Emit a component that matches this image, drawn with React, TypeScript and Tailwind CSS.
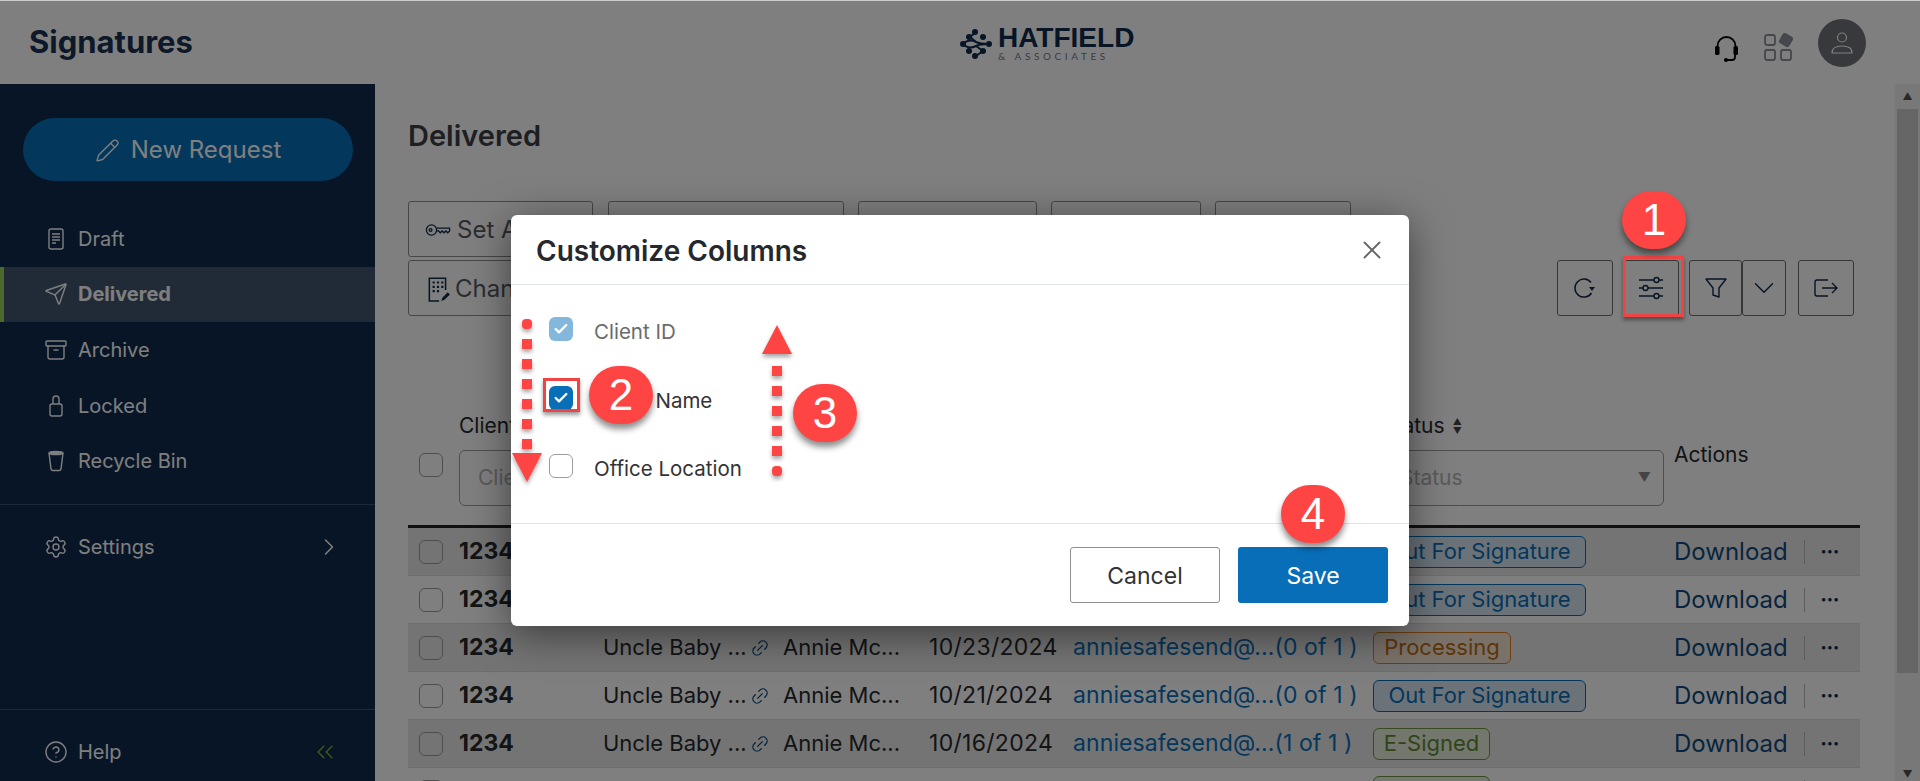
import React from 'react'
import {
  Archive,
  Check,
  ChevronDown,
  ChevronRight,
  ChevronsLeft,
  CircleHelp,
  Link2,
  Pencil,
  Send,
  Settings,
  X,
} from 'lucide-react'

const rows = [
  { date: '10/25/2024', count: '(0 of 1 )', status: 'out' },
  { date: '10/24/2024', count: '(0 of 1 )', status: 'out' },
  { date: '10/23/2024', count: '(0 of 1 )', status: 'processing' },
  { date: '10/21/2024', count: '(0 of 1 )', status: 'out' },
  { date: '10/16/2024', count: '(1 of 1 )', status: 'signed' },
  { date: '10/15/2024', count: '(1 of 1 )', status: 'signed' },
]

const columns = 'grid grid-cols-[51px_144px_180px_146px_144px_300px_301px_1fr]'

export default function App() {
  return (
    <div className="relative h-[781px] w-[1920px] overflow-hidden bg-white font-['Inter',sans-serif] text-[21px] text-[#25282d]">
      <header className="flex h-[84px] items-center border-t border-[#cccccc] pr-[54px] pl-[29px]">
        <h1 className="w-[931px] text-[31px] font-bold text-[#1b3350]">Signatures</h1>
        <Logo />
        <div className="ml-auto flex items-start">
          <HeadsetIcon />
          <AppsIcon />
          <div className="ml-[25px] flex h-[48px] w-[48px] items-center justify-center rounded-full bg-[#6e7278]">
            <UserIcon />
          </div>
        </div>
      </header>

      <div className="flex h-[697px]">
        <Sidebar />
        <main className="w-[1520px] pl-[33px]">
          <h2 className="pt-[32px] text-[29px] leading-[40px] font-semibold text-[#3a3f47]">Delivered</h2>
          <Toolbar />
          <DocumentsTable />
        </main>
        <div className="flex w-[25px] flex-col items-center bg-[#f1f1f1]">
          <div className="flex h-[25px] items-center justify-center text-[10px] text-[#505050]">▲</div>
          <div className="h-[564px] w-[21px] bg-[#cdcdcd]" />
          <div className="mt-auto flex h-[14px] items-center text-[10px] text-[#505050]">▼</div>
        </div>
      </div>

      <div className="absolute inset-x-0 top-[1px] bottom-0 bg-black/50" />
      <CustomizeColumnsDialog />
      <Annotations />
    </div>
  )
}

function Logo() {
  return (
    <div className="mt-[2px] flex items-center gap-[6px] text-[#0e2a4c]">
      <svg viewBox="0 0 32 32" className="h-[32px] w-[32px]" fill="currentColor" stroke="currentColor" strokeWidth="2">
        <path d="M16 4l-6 5 6 5M3 16c4-4 9-4 13-2s9 2 13 2M3 16c4 4 9 4 13 2s9-2 13-2M16 28l7-5-7-5" fill="none" />
        <circle cx="15" cy="4" r="3" stroke="none" />
        <circle cx="9" cy="9" r="3" stroke="none" />
        <circle cx="23" cy="9" r="3" stroke="none" />
        <circle cx="3" cy="16" r="3" stroke="none" />
        <circle cx="29" cy="16" r="3" stroke="none" />
        <circle cx="23" cy="23" r="3" stroke="none" />
        <circle cx="9" cy="23" r="3" stroke="none" />
        <circle cx="15" cy="28" r="3" stroke="none" />
      </svg>
      <div className="w-[138px]">
        <div className="font-['Liberation_Sans',sans-serif] text-[28px] leading-[25px] font-bold whitespace-nowrap">HATFIELD</div>
        <div className="font-['Lato',sans-serif] text-[10px] leading-[12px] tracking-[3.6px] whitespace-nowrap text-[#6b7c92]">&amp; ASSOCIATES</div>
      </div>
    </div>
  )
}

function HeadsetIcon() {
  return (
    <svg viewBox="0 0 23 28" className="mt-[16px] h-[28px] w-[23px] text-black" fill="none" stroke="currentColor" strokeWidth="1.8">
      <path d="M2.5 14v-3a9 9 0 0 1 18 0v3" />
      <rect x="0" y="11" width="4.5" height="9" rx="1.5" fill="currentColor" stroke="none" />
      <rect x="18.5" y="11" width="4.5" height="9" rx="1.5" fill="currentColor" stroke="none" />
      <path d="M20 20v2a3 3 0 0 1-3 3h-5" />
      <circle cx="11" cy="25" r="2" fill="currentColor" stroke="none" />
    </svg>
  )
}

function AppsIcon() {
  return (
    <svg viewBox="0 0 29 29" className="mt-[13px] ml-[26px] h-[29px] w-[29px] text-[#888e98]" fill="none" stroke="currentColor" strokeWidth="1.8">
      <rect x="1" y="3" width="10" height="10" rx="2" />
      <rect x="1" y="18" width="10" height="10" rx="2" />
      <rect x="17" y="18" width="10" height="10" rx="2" />
      <rect x="17" y="3" width="10" height="10" rx="2" fill="currentColor" transform="rotate(30 22 8)" />
    </svg>
  )
}

function UserIcon() {
  return (
    <svg viewBox="0 0 24 24" className="h-[24px] w-[24px] text-white" fill="none" stroke="currentColor" strokeWidth="1.2">
      <circle cx="12" cy="6.5" r="4.5" />
      <path d="M2 22c0-5 4-7 10-7s10 2 10 7z" strokeLinejoin="round" />
    </svg>
  )
}

function DraftIcon() {
  return (
    <svg viewBox="0 0 24 24" className="h-[24px] w-[24px]" fill="none" stroke="currentColor" strokeWidth="1.4">
      <rect x="5" y="2" width="14" height="20" rx="2" />
      <path d="M8 7h8M8 10h8M8 13h8M8 16h4" />
    </svg>
  )
}

function LockIcon() {
  return (
    <svg viewBox="0 0 24 24" className="h-[24px] w-[24px]" fill="none" stroke="currentColor" strokeWidth="1.4">
      <rect x="6" y="10" width="12" height="12" rx="2" />
      <path d="M9 10V5a3 3 0 0 1 6 0v5" />
    </svg>
  )
}

function CupIcon() {
  return (
    <svg viewBox="0 0 24 24" className="h-[24px] w-[24px]" fill="none" stroke="currentColor" strokeWidth="1.4">
      <ellipse cx="12" cy="4" rx="7" ry="1.6" fill="currentColor" />
      <path d="M5 4l2 16a2 2 0 0 0 2 1.5h6a2 2 0 0 0 2-1.5l2-16" />
    </svg>
  )
}

function Sidebar() {
  return (
    <aside className="flex w-[375px] flex-col bg-[#0e2a4c] text-[20px] text-white">
      <div className="px-[23px] pt-[34px]">
        <button className="flex h-[63px] w-[330px] items-center justify-center gap-[11px] rounded-full bg-[#086eb8] pt-[1px] text-[24px]">
          <Pencil className="h-[25px] w-[25px]" strokeWidth={1.3} />
          New Request
        </button>
      </div>
      <nav className="mt-[30px] flex flex-col">
        <NavItem icon={<DraftIcon />} label="Draft" />
        <NavItem icon={<Send className="h-[24px] w-[24px]" strokeWidth={1.4} />} label="Delivered" active />
        <NavItem icon={<Archive className="h-[24px] w-[24px]" strokeWidth={1.4} />} label="Archive" />
        <NavItem icon={<LockIcon />} label="Locked" />
        <NavItem icon={<CupIcon />} label="Recycle Bin" />
      </nav>
      <div className="mt-[15px] border-t border-[#3c5472]">
        <div className="flex h-[85px] items-center pr-[32px] pl-[44px]">
          <Settings className="mr-[10px] h-[24px] w-[24px]" strokeWidth={1.4} />
          <span className="flex-1">Settings</span>
          <ChevronRight className="h-[28px] w-[28px]" strokeWidth={1.3} />
        </div>
      </div>
      <div className="mt-[119px] flex h-[72px] items-center border-t border-[#3c5472] pt-[13px] pr-[36px] pl-[44px]">
        <CircleHelp className="mr-[10px] h-[24px] w-[24px]" strokeWidth={1.4} />
        <span className="flex-1">Help</span>
        <ChevronsLeft className="h-[28px] w-[28px] text-[#7fb33f]" strokeWidth={1.2} />
      </div>
    </aside>
  )
}

function NavItem({ icon, label, active }: { icon: React.ReactNode; label: string; active?: boolean }) {
  return (
    <div
      className={
        active
          ? 'flex h-[55.6px] items-center gap-[10px] border-l-[4px] border-[#97d254] bg-[#42566f] pl-[40px] font-bold'
          : 'flex h-[55.6px] items-center gap-[10px] pl-[44px]'
      }
    >
      {icon}
      <span>{label}</span>
    </div>
  )
}

function ToolButton({ children, className }: { children?: React.ReactNode; className: string }) {
  return (
    <div className={`flex h-[56px] items-center rounded-[3px] border border-[#8f8f8f] pt-[1px] text-[24px] text-[#555b63] ${className}`}>
      {children}
    </div>
  )
}

function IconButton({ children, className }: { children: React.ReactNode; className: string }) {
  return (
    <button className={`flex h-[56px] items-center justify-center rounded-[3px] border border-[#6f6f6f] text-[#0e2a4c] ${className}`}>
      {children}
    </button>
  )
}

function Toolbar() {
  return (
    <div className="mt-[45px] flex w-[1446px] items-end justify-between">
      <div className="flex flex-col gap-[3px]">
        <div className="flex gap-[14px]">
          <ToolButton className="mr-[1px] w-[185px] pl-[16px]">
            <KeyIcon />
            Set Access
          </ToolButton>
          <ToolButton className="w-[236px]" />
          <ToolButton className="w-[179px]" />
          <ToolButton className="w-[150px]" />
          <ToolButton className="w-[136px]" />
        </div>
        <ToolButton className="w-[185px] pl-[16px]">
          <BuildingIcon />
          Change
        </ToolButton>
      </div>
      <div className="flex items-center">
        <IconButton className="w-[56px]">
          <RefreshIcon />
        </IconButton>
        <IconButton className="ml-[10px] w-[56px]">
          <SlidersIcon />
        </IconButton>
        <IconButton className="ml-[10px] w-[53px]">
          <FunnelIcon />
        </IconButton>
        <IconButton className="w-[44px]">
          <ChevronDown className="h-[34px] w-[34px]" strokeWidth={1} />
        </IconButton>
        <IconButton className="ml-[12px] w-[56px]">
          <ExportIcon />
        </IconButton>
      </div>
    </div>
  )
}

function KeyIcon() {
  return (
    <svg viewBox="0 0 28 16" className="mr-[6px] h-[16px] w-[26px] text-[#0e2a4c]" fill="none" stroke="currentColor" strokeWidth="1.4">
      <circle cx="7" cy="8" r="5.5" />
      <circle cx="6" cy="8" r="1.5" />
      <path d="M12.5 6h14v3l-2 2-2-2-2 2-2-2-2 2-2-2h-2" />
    </svg>
  )
}

function BuildingIcon() {
  return (
    <svg viewBox="0 0 24 24" className="mr-[4px] h-[26px] w-[26px] text-[#0e2a4c]" fill="none" stroke="currentColor" strokeWidth="1.4">
      <path d="M13 23H4V2h15v11" />
      <path d="M7 6h2M11 6h2M15 6h2M7 10h2M11 10h2M15 10h2M7 14h2M11 14h2" strokeWidth="2" />
      <path d="M15 23l1-3 5-5 2 2-5 5z" fill="currentColor" stroke="none" />
    </svg>
  )
}

function RefreshIcon() {
  return (
    <svg viewBox="0 0 24 24" className="h-[24px] w-[24px]" fill="none" stroke="currentColor" strokeWidth="1.5">
      <path d="M18.5 17A9 9 0 1 1 18 6.5" />
      <path d="M16 11h6l-3 4z" fill="currentColor" stroke="none" />
    </svg>
  )
}

function SlidersIcon() {
  return (
    <svg viewBox="0 0 26 26" className="h-[26px] w-[26px]" fill="none" stroke="currentColor" strokeWidth="1.4">
      <path d="M1 5h15M21 5h4M1 13h4M10 13h15M1 21h15M21 21h4" />
      <circle cx="18.5" cy="5" r="2.5" />
      <circle cx="7.5" cy="13" r="2.5" />
      <circle cx="18.5" cy="21" r="2.5" />
    </svg>
  )
}

function FunnelIcon() {
  return (
    <svg viewBox="0 0 22 20" className="h-[20px] w-[22px]" fill="none" stroke="currentColor" strokeWidth="1.4" strokeLinejoin="round">
      <path d="M1 1h20l-7 9v9l-6-2v-7z" />
    </svg>
  )
}

function ExportIcon() {
  return (
    <svg viewBox="0 0 24 18" className="h-[18px] w-[24px]" fill="none" stroke="currentColor" strokeWidth="1.4">
      <path d="M14 1H3a2 2 0 0 0-2 2v12a2 2 0 0 0 2 2h11" />
      <path d="M8 9h15M18 4l5 5-5 5" />
    </svg>
  )
}

function Box({ className }: { className?: string }) {
  return <span className={`block h-[24px] w-[24px] rounded-[6px] border border-[#9c9c9c] ${className ?? ''}`} />
}

function StatusBadge({ status }: { status: string }) {
  if (status === 'processing') {
    return <Badge className="w-[138px] border-[#dc7f1f] bg-[#f5e5d3] text-[#bb6a12]">Processing</Badge>
  }
  if (status === 'signed') {
    return <Badge className="w-[117px] border-[#6f9647] bg-[#e7efdc] text-[#5f8a33]">E-Signed</Badge>
  }
  return <Badge className="w-[213px] border-[#086eb8] bg-[#d6e6f2] text-[#086eb8]">Out For Signature</Badge>
}

function Badge({ children, className }: { children: React.ReactNode; className: string }) {
  return (
    <span className={`flex h-[32px] items-center justify-center rounded-[6px] border text-[22px] whitespace-nowrap ${className}`}>
      {children}
    </span>
  )
}

function DocumentsTable() {
  return (
    <div className="mt-[92px] w-[1452px]">
      <div className={`${columns} h-[120px] border-b-[3px] border-[#222]`}>
        <div className="pt-[45px] pl-[11px]">
          <Box />
        </div>
        <div className="col-span-6 grid grid-cols-[907px_1fr]">
          <div>
            <div className="h-[34px] pt-[1px] leading-[34px]">Client ID</div>
            <div className="mt-[8px] flex h-[56px] w-[144px] items-center rounded-[6px] border border-[#9c9c9c] pl-[18px] text-[#b5b5b5]">Client ID</div>
          </div>
          <div className="ml-[7px]">
            <div className="flex h-[34px] items-center gap-[8px] pt-[1px] pl-[9px] leading-[34px]">
              Status
              <span className="flex flex-col text-[9px] leading-[9px] text-[#444]">
                <span>▲</span>
                <span>▼</span>
              </span>
            </div>
            <div className="mt-[8px] flex h-[56px] w-[291px] items-center justify-between rounded-[6px] border border-[#9c9c9c] pr-[12px] pl-[26px] text-[#b5b5b5]">
              Status
              <span className="text-[13px] text-[#888]">▼</span>
            </div>
          </div>
        </div>
        <div className="pt-[31px]">Actions</div>
      </div>
      {rows.map((row, i) => (
        <div
          key={i}
          className={`${columns} h-[48px] items-center border-b border-[#dcdcdc] ${i % 2 === 0 ? 'bg-[#e8e8e8]' : ''}`}
        >
          <div className="pl-[11px]">
            <Box />
          </div>
          <div className="text-[23px] font-bold">1234</div>
          <div className="flex items-center gap-[3px] text-[22px] whitespace-nowrap">
            Uncle Baby ...
            <Link2 className="h-[20px] w-[20px] -rotate-45 text-[#0e4a80]" strokeWidth={1.6} />
          </div>
          <div className="text-[22px]">Annie Mc...</div>
          <div className="text-[23px] tracking-[0.3px]">{row.date}</div>
          <div className="text-[23px] tracking-[0.1px] whitespace-nowrap text-[#086eb8]">anniesafesend@...{row.count}</div>
          <div>
            <StatusBadge status={row.status} />
          </div>
          <div className="flex items-center text-[#0e4a80]">
            <span className="w-[130px] text-[24px]">Download</span>
            <span className="mr-[16px] h-[24px] border-l border-[#bbb]" />
            <span className="text-[11px] leading-none font-bold tracking-[1px] text-[#0e2a4c]">•••</span>
          </div>
        </div>
      ))}
    </div>
  )
}

function CustomizeColumnsDialog() {
  return (
    <div className="absolute top-[215px] left-[511px] flex h-[411px] w-[898px] flex-col rounded-[6px] bg-white shadow-[0_8px_40px_rgba(0,0,0,0.5)]">
      <div className="flex h-[70px] items-center justify-between border-b border-[#e0e3e8] pr-[22px] pl-[25px]">
        <h3 className="pt-[2px] text-[28px] font-semibold text-[#25282d]">Customize Columns</h3>
        <X className="h-[30px] w-[30px] text-[#666]" strokeWidth={1.5} />
      </div>
      <div className="flex h-[238px] flex-col pt-[32px] pl-[38px] text-[20.5px]">
        <ColumnOption label="Client ID" checked muted />
        <ColumnOption label="Client Name" checked />
        <ColumnOption label="Office Location" />
      </div>
      <div className="flex flex-1 items-center justify-end gap-[18px] border-t border-[#e0e3e8] pr-[21px]">
        <button className="h-[56px] w-[150px] rounded-[3px] border border-[#8f8f8f] pt-[3px] text-[23px] text-[#333]">Cancel</button>
        <button className="h-[56px] w-[150px] rounded-[3px] bg-[#086eb8] pt-[3px] text-[23px] text-white">Save</button>
      </div>
    </div>
  )
}

function ColumnOption({ label, checked, muted }: { label: string; checked?: boolean; muted?: boolean }) {
  return (
    <div className={`flex h-[69px] items-start gap-[21px] ${muted ? 'text-[#6b6b6b]' : 'text-[#333]'}`}>
      {checked ? (
        <span className={`flex h-[24px] w-[24px] items-center justify-center rounded-[6px] ${muted ? 'bg-[#84b7dc]' : 'bg-[#086eb8]'}`}>
          <Check className="h-[16px] w-[16px] text-white" strokeWidth={3.5} />
        </span>
      ) : (
        <Box />
      )}
      <span className="pt-[1px] leading-[28px]">{label}</span>
    </div>
  )
}

function Marker({ n, className }: { n: number; className: string }) {
  return (
    <div className={`absolute flex h-[58px] w-[64px] items-center justify-center rounded-full bg-[#ff4444] font-['Liberation_Sans',sans-serif] text-[44px] text-white shadow-[0_5px_6px_rgba(0,0,0,0.45)] ${className}`}>
      {n}
    </div>
  )
}

function Annotations() {
  return (
    <>
      <div className="absolute top-[256px] left-[1623px] h-[61px] w-[61px] border-[3px] border-[#f04444] shadow-[0_3px_4px_rgba(0,0,0,0.4)]" />
      <div className="absolute top-[378px] left-[543px] h-[34px] w-[37px] border-[3px] border-[#f04444] shadow-[0_3px_4px_rgba(0,0,0,0.4)]" />
      <Marker n={1} className="top-[191px] left-[1622px]" />
      <Marker n={2} className="top-[366px] left-[589px]" />
      <Marker n={3} className="top-[384px] left-[793px]" />
      <Marker n={4} className="top-[485px] left-[1281px]" />
      <svg className="absolute top-0 left-0 h-[781px] w-[1920px] drop-shadow-[0_3px_2px_rgba(0,0,0,0.35)]" viewBox="0 0 1920 781" fill="#ff4444">
        <rect x="522" y="319" width="10" height="10" rx="4" />
        <rect x="522" y="339" width="10" height="10" />
        <rect x="522" y="359" width="10" height="10" />
        <rect x="522" y="379" width="10" height="10" />
        <rect x="522" y="399" width="10" height="10" />
        <rect x="522" y="419" width="10" height="10" />
        <rect x="522" y="439" width="10" height="10" />
        <path d="M512 453h30l-15 29z" />
        <path d="M777 325l15 29h-30z" />
        <rect x="772" y="366" width="10" height="10" />
        <rect x="772" y="386" width="10" height="10" />
        <rect x="772" y="406" width="10" height="10" />
        <rect x="772" y="426" width="10" height="10" />
        <rect x="772" y="446" width="10" height="10" />
        <rect x="772" y="466" width="10" height="10" rx="4" />
      </svg>
    </>
  )
}
